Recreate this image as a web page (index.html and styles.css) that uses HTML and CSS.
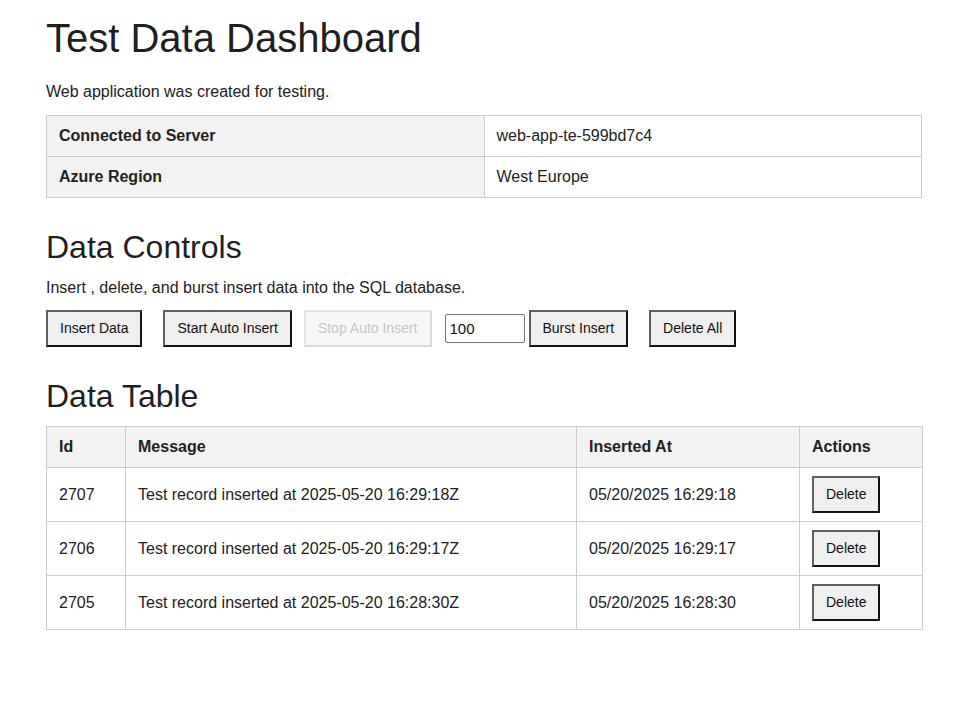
FILE: index.html
```html
<!DOCTYPE html>
<html lang="en">
<head>
<meta charset="utf-8">
<title>Test Data Dashboard</title>
<link rel="stylesheet" href="styles.css">
</head>
<body>
<main class="page">
  <h1 class="title">Test Data Dashboard</h1>
  <p class="intro">Web application was created for testing.</p>
  <table class="grid info">
    <colgroup><col class="c-half"><col class="c-half"></colgroup>
    <tr><th>Connected to Server</th><td>web-app-te-599bd7c4</td></tr>
    <tr><th>Azure Region</th><td>West Europe</td></tr>
  </table>

  <h2 class="section first">Data Controls</h2>
  <p class="desc">Insert , delete, and burst insert data into the SQL database.</p>
  <div class="controls">
    <button class="btn gap-l">Insert Data</button>
    <button class="btn gap-s">Start Auto Insert</button>
    <button class="btn gap-m" disabled>Stop Auto Insert</button>
    <input class="count" type="text" value="100">
    <button class="btn gap-l">Burst Insert</button>
    <button class="btn">Delete All</button>
  </div>

  <h2 class="section second">Data Table</h2>
  <table class="grid data">
    <colgroup>
      <col class="c-id"><col class="c-msg"><col class="c-at"><col class="c-act">
    </colgroup>
    <thead>
      <tr><th>Id</th><th>Message</th><th>Inserted At</th><th>Actions</th></tr>
    </thead>
    <tbody>
      <tr><td>2707</td><td>Test record inserted at 2025-05-20 16:29:18Z</td><td>05/20/2025 16:29:18</td><td><button class="btn">Delete</button></td></tr>
      <tr><td>2706</td><td>Test record inserted at 2025-05-20 16:29:17Z</td><td>05/20/2025 16:29:17</td><td><button class="btn">Delete</button></td></tr>
      <tr><td>2705</td><td>Test record inserted at 2025-05-20 16:28:30Z</td><td>05/20/2025 16:28:30</td><td><button class="btn">Delete</button></td></tr>
    </tbody>
  </table>
</main>
</body>
</html>
```

FILE: styles.css
```css
html, body {
  margin: 0;
  padding: 0;
  background: #ffffff;
}

body {
  font-family: "Liberation Sans", Arial, sans-serif;
  font-size: 16px;
  line-height: 1.5;
  color: #222222;
}

.page {
  width: 876px;
  padding: 14px 0 40px 46px;
}

.title {
  font-size: 40px;
  font-weight: normal;
  line-height: 48px;
  margin: 0 0 18px 0;
  color: #1f1f1f;
}

.intro {
  margin: 0 0 11px 0;
}

.grid {
  width: 100%;
  border-collapse: collapse;
  table-layout: fixed;
}

.grid th,
.grid td {
  border: 1px solid #cccccc;
  padding: 8px 12px;
  text-align: left;
  vertical-align: middle;
}

.grid th {
  background: #f2f2f2;
  font-weight: bold;
}

.c-half { width: 50%; }
.c-id { width: 79px; }
.c-msg { width: 451px; }
.c-at { width: 223px; }
.c-act { width: 123px; }

.section {
  font-size: 32px;
  font-weight: normal;
  line-height: 38px;
  margin: 0;
  color: #1f1f1f;
}

.section.first {
  margin-top: 30px;
  margin-bottom: 10px;
}

.section.second {
  margin-top: 30px;
  margin-bottom: 11px;
}

.desc {
  margin: 0 0 10px 0;
}

.controls {
  display: flex;
  align-items: center;
}

.btn {
  font-family: "Liberation Sans", Arial, sans-serif;
  font-size: 14px;
  line-height: 17px;
  padding: 8px 12px;
  background: #efefef;
  color: #111111;
  border-style: solid;
  border-width: 2px;
  border-color: #606060 #111111 #111111 #606060;
  border-radius: 0;
  margin: 0;
}

.btn:disabled {
  color: #c4c4c4;
  background: #f6f6f6;
  border-color: #e2e2e2 #d8d8d8 #d8d8d8 #e2e2e2;
}

.gap-l { margin-right: 21px; }
.gap-m { margin-right: 13px; }
.gap-s { margin-right: 12px; }

.count {
  font-family: "Liberation Sans", Arial, sans-serif;
  font-size: 15px;
  line-height: 17px;
  width: 80px;
  box-sizing: border-box;
  padding: 5px 4px;
  border: 1px solid #767676;
  border-radius: 2px;
  color: #111111;
  margin: 0 4px 0 0;
}

.grid td .btn {
  vertical-align: middle;
}
```
